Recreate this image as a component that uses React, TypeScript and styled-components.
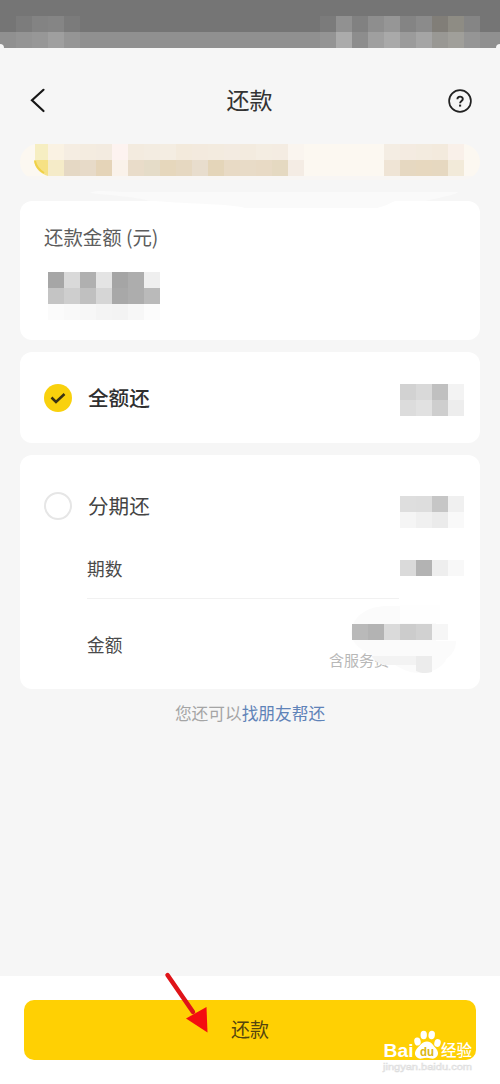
import React from 'react';
import styled, { createGlobalStyle } from 'styled-components';

const GlobalStyle = createGlobalStyle`
  * { box-sizing: border-box; }
  body { margin: 0; background: #f6f6f6; }
`;

const Screen = styled.div`
  display: flex;
  flex-direction: column;
  width: 500px;
  height: 1084px;
  overflow: hidden;
  background: #f6f6f6;
  color: #333;
  font-family: 'Noto Sans CJK SC', sans-serif;
`;

const StatusBar = styled.div`
  position: relative;
  height: 48px;
  flex: none;
  background: linear-gradient(#757575 0 32px, #909090 32px);
  padding: 16px 20px 0 16px;
  display: flex;
  justify-content: space-between;
`;

const Corner = styled.i<{ $side: 'left' | 'right' }>`
  position: absolute;
  bottom: 0;
  ${(p) => p.$side}: 0;
  width: 4px;
  height: 4px;
  background: #f6f6f6;
  border-radius: ${(p) => (p.$side === 'left' ? '0 4px 0 0' : '4px 0 0 0')};
`;

const MosaicGrid = styled.div<{ $cols: number }>`
  display: grid;
  flex: none;
  grid-template-columns: repeat(${(p) => p.$cols}, 16px);
  grid-auto-rows: 16px;
`;

const Cell = styled.i<{ $tone: string }>`
  background: ${(p) => p.$tone};
`;

function Mosaic({ rows }: { rows: string[] }) {
  const grid = rows.map((r) => r.split(' '));
  return (
    <MosaicGrid $cols={grid[0].length}>
      {grid.flat().map((c, i) => (
        <Cell key={i} $tone={c === '-' ? 'transparent' : `#${c}`} />
      ))}
    </MosaicGrid>
  );
}

const Header = styled.header`
  height: 96px;
  flex: none;
  display: flex;
  align-items: center;
  justify-content: space-between;
  padding: 9px 28px 0 29px;
`;

const Title = styled.h1`
  margin: 0;
  padding: 0 0 4px 4px;
  font-size: 23px;
  font-weight: 400;
  line-height: 32px;
`;

const HeaderIcon = styled.svg`
  display: block;
  flex: none;
`;

const Banner = styled.div`
  position: relative;
  height: 36px;
  flex: none;
  margin: 0 20px;
  padding: 0 16px 0 12px;
  border-radius: 18px;
  background: linear-gradient(#fcf8f1 0 32px, #f8f6f4 32px);
  display: flex;
  justify-content: space-between;
`;

const Coin = styled.svg`
  position: absolute;
  left: 14px;
  top: 0;
`;

const Smudge = styled.svg`
  display: block;
  flex: none;
  margin: 5px 0 0 90px;
`;

const Card = styled.section<{ $height: number }>`
  height: ${(p) => p.$height}px;
  margin: 0 20px 12px;
  flex: none;
  background: #fff;
  border-radius: 12px;
`;

const AmountCard = styled(Card)`
  position: relative;
  padding: 22px 24px 0;
`;

const CardSmear = styled.svg`
  position: absolute;
  left: 135px;
  top: 0;
`;

const AmountLabel = styled.div`
  font-size: 19.4px;
  line-height: 28px;
  color: #5c5c5c;
`;

const AmountValue = styled.div`
  padding: 21px 0 0 4px;
`;

const OptionCard = styled(Card)`
  display: flex;
  flex-direction: column;
`;

const OptionRow = styled.div<{ $height: number; $top?: number }>`
  height: ${(p) => p.$height}px;
  padding: ${(p) => p.$top ?? 0}px 16px 0 24px;
  display: flex;
  align-items: center;
`;

const Radio = styled.span<{ $checked?: boolean }>`
  width: 28px;
  height: 28px;
  flex: none;
  border-radius: 50%;
  border: ${(p) => (p.$checked ? 'none' : '2px solid #e6e6e6')};
  background: ${(p) => (p.$checked ? '#f9d10d' : '#fff')};
  display: flex;
  align-items: center;
  justify-content: center;
`;

const OptionName = styled.span<{ $strong?: boolean }>`
  flex: 1;
  margin-left: 16px;
  padding-bottom: 2px;
  font-size: 20.6px;
  line-height: 30px;
  font-weight: ${(p) => (p.$strong ? 500 : 400)};
  color: ${(p) => (p.$strong ? '#303030' : '#444')};
`;

const OptionValue = styled.div<{ $drop: number }>`
  padding-top: ${(p) => p.$drop}px;
`;

const DetailRow = styled.div<{ $height: number }>`
  height: ${(p) => p.$height}px;
  padding: 0 16px 0 67px;
  display: flex;
  align-items: center;
  justify-content: space-between;
`;

const DetailName = styled.span`
  font-size: 17.7px;
  line-height: 26px;
  color: #4a4a4a;
`;

const Divider = styled.hr`
  margin: 0 81px 0 67px;
  border: 0;
  height: 1px;
  flex: none;
  background: #f1f1f1;
`;

const SumColumn = styled.div`
  position: relative;
  width: 135px;
  height: 90px;
  padding-top: 49px;
`;

const Fee = styled.span`
  display: block;
  font-size: 15px;
  line-height: 24px;
  color: #b8b8b8;
`;

const Veil = styled.svg`
  position: absolute;
  left: 0;
  top: 0;
`;

const SumMask = styled.div`
  position: absolute;
  right: 16px;
  top: 25px;
`;

const Hint = styled.p`
  margin: 0;
  text-align: center;
  font-size: 16.7px;
  line-height: 25px;
  color: #a5a5a5;
`;

const FriendLink = styled.a`
  color: #5f83b8;
`;

const Footer = styled.footer`
  position: relative;
  margin-top: auto;
  height: 108px;
  flex: none;
  background: #fff;
  padding: 24px;
`;

const PayButton = styled.button`
  display: block;
  width: 452px;
  height: 60px;
  border: 0;
  border-radius: 10px;
  padding: 0 0 2px;
  background: #ffd003;
  color: #54450f;
  font: 400 19px/58px 'Noto Sans CJK SC', sans-serif;
`;

const Pointer = styled.svg`
  position: absolute;
  left: 160px;
  top: -8px;
`;

const Watermark = styled.svg`
  position: absolute;
  left: 376px;
  top: 50px;
`;

export default function App() {
  return (
    <Screen>
      <GlobalStyle />
      <StatusBar>
        <Mosaic rows={['7c7c7c 838383 858585 7b7b7b', '949494 979797 9f9f9f 959595']} />
        <Mosaic
          rows={[
            '7b7b7b 919191 818181 8e8e8e 969696 848484 8b8b8b 817e78 8e8c84 858585',
            '949494 ababab 8d8d8d 9f9f9f a9a9a9 9b9b9b a5a5a5 999894 a09f9a 959595',
          ]}
        />
        <Corner $side="left" />
        <Corner $side="right" />
      </StatusBar>

      <Header>
        <HeaderIcon width="18" height="26" viewBox="0 0 18 26" fill="none" stroke="#171717" strokeWidth="2.2">
          <path d="M14.500 1.800 3 12.300l11.500 10.700" strokeLinecap="round" />
        </HeaderIcon>
        <Title>还款</Title>
        <HeaderIcon width="24" height="24" viewBox="0 0 24 24" fill="none" stroke="#222" strokeWidth="1.7">
          <circle cx="12" cy="12" r="10.9" />
          <path d="M9.400 10.200C9.400 6.800 14.800 6.800 14.800 9.900c0 2-2.700 2.100-2.700 4.300" strokeWidth="1.9" />
          <path d="M12.100 15.600v2" strokeWidth="2.100" />
        </HeaderIcon>
      </Header>

      <Banner>
        <Mosaic
          rows={[
            '- faf2e3 f5ede2 f4ece0 f3ebe0 fdf3f0 f3ebdf f3ece1 f4ede2 f3eadc f3eade f3ebdf f3ebe1 f3ebdf f4ede2 f4ece2 faf5ef',
            '- f5ebc8 e5d8c4 e7dac8 e5d4b8 faf2ea e9dcc9 e5dcc8 e6d7bc e6d8c1 e8ddcd e4d5b9 e8dac5 e8dbc7 e8dac5 e5d9c1 f4ece4',
          ]}
        />
        <Mosaic rows={['f4ede3 f4ebe1 f3ebdf f3eadd f9f0e9', 'efe4d5 e6d8c1 e7d8bf e6d8c0 f2ead9']} />
        <Coin width="14" height="32" viewBox="0 0 14 32">
          <path d="M1 0h13v16H1z" fill="#f6eec2" />
          <path d="M0 16h14v16C8 30 1 26 0 16z" fill="#f6e184" />
          <path d="M1 17c1 6 4 9 9 12" fill="none" stroke="#f0d147" strokeWidth="2" />
        </Coin>
      </Banner>
      <Smudge width="390" height="16" viewBox="0 0 390 16">
        <path d="M0 8C5 4 20 7 42 7h326c-2 3-22 6-32 9H60C40 11 25 11 0 8z" fill="#fafafa" />
      </Smudge>

      <AmountCard $height={139}>
        <CardSmear width="240" height="7" viewBox="0 0 240 7">
          <path d="M0 0h240c-6 3-10 5-18 7H90C80 3 35 3 0 0z" fill="#fafafa" />
        </CardSmear>
        <AmountLabel>还款金额 (元)</AmountLabel>
        <AmountValue>
          <Mosaic
            rows={[
              'a6a6a6 d9d9d9 b0b0b0 e4e4e4 a5a5a5 adadad efefef',
              'c4c4c4 cecece c0c0c0 d6d6d6 a8a8a8 adadad bababa',
              'fbfbfb f9f9f9 f7f7f7 f4f4f4 f3f3f3 f7f7f7 fcfcfc',
            ]}
          />
        </AmountValue>
      </AmountCard>

      <OptionCard $height={91}>
        <OptionRow $height={91} $top={1}>
          <Radio $checked>
            <svg width="16" height="14" viewBox="0 0 16 14" fill="none" stroke="#3a3213" strokeWidth="2.5">
              <path d="M1.500 6.500 6 11l8.500-8" />
            </svg>
          </Radio>
          <OptionName $strong>全额还</OptionName>
          <OptionValue $drop={4}>
            <Mosaic rows={['d2d2d2 d9d9d9 c0c0c0 f3f3f3', 'dcdcdc e1e1e1 cecece ededed']} />
          </OptionValue>
        </OptionRow>
      </OptionCard>

      <OptionCard $height={234}>
        <OptionRow $height={82} $top={20}>
          <Radio />
          <OptionName>分期还</OptionName>
          <OptionValue $drop={12}>
            <Mosaic rows={['dedede dddddd c6c6c6 f0f0f0', 'f5f5f5 f0f0f0 ebebeb f9f9f9']} />
          </OptionValue>
        </OptionRow>
        <DetailRow $height={61}>
          <DetailName>期数</DetailName>
          <Mosaic rows={['dadada b3b3b3 eeeeee f8f8f8']} />
        </DetailRow>
        <Divider />
        <DetailRow $height={90}>
          <DetailName>金额</DetailName>
          <SumColumn>
            <Fee>含服务费</Fee>
            <Veil width="135" height="90" viewBox="0 0 135 90">
              <path d="M22 34C24 14 42 6 62 7h45v35h20c0 8-4 14-10 18-2 8-15 14-26 14-12 0-20-5-25-8-10 0-17-1-21-9-12-5-22-12-23-23z" fill="#fbfbfb" />
              <path d="M71 6h40v18H71z" fill="#fefefe" />
              <path d="M42 57h49v9H58c-7 0-11-3-16-9z" fill="#f3f3f3" />
              <path d="M87 57h16v16c-6 2-12 1-16-1z" fill="#ececec" />
            </Veil>
            <SumMask>
              <Mosaic rows={['b9b9b9 b3b3b3 dadada cccccc d1d1d1 f6f6f6']} />
            </SumMask>
          </SumColumn>
        </DetailRow>
      </OptionCard>

      <Hint>
        您还可以<FriendLink>找朋友帮还</FriendLink>
      </Hint>

      <Footer>
        <PayButton>还款</PayButton>
        <Pointer width="54" height="70" viewBox="0 0 54 70">
          <path d="M7.500 7 33 44" stroke="#df1419" strokeWidth="4.5" strokeLinecap="round" />
          <path d="M47.500 64.500 46.500 39 26 50.500z" fill="#f40d10" />
        </Pointer>
        <Watermark width="110" height="54" viewBox="0 0 110 54" fill="#fff">
          <text x="7.500" y="31" fontFamily="'Liberation Sans'" fontWeight="700" fontSize="18.500" textLength="30" lengthAdjust="spacingAndGlyphs">Bai</text>
          <ellipse cx="41.500" cy="15.500" rx="3.200" ry="4" transform="rotate(-12 41.500 15.500)" />
          <ellipse cx="47.700" cy="9" rx="3.200" ry="4.200" />
          <ellipse cx="55.700" cy="9" rx="3.200" ry="4.200" transform="rotate(8 55.700 9)" />
          <ellipse cx="61.500" cy="17" rx="3.200" ry="4" transform="rotate(15 61.500 17)" />
          <path d="M51 15.500c5 0 6 4 9 7 5 6 0 11-5 10-3-1-6-1-9 0-5 1-10-4-5-10 3-3 5-7 10-7z" />
          <text x="44" y="30" fill="#dab510" fontFamily="'Liberation Sans'" fontWeight="700" fontSize="12" textLength="14" lengthAdjust="spacingAndGlyphs">du</text>
          <text x="65" y="30" fontFamily="'Noto Sans CJK SC'" fontWeight="500" fontSize="15.500" textLength="31">经验</text>
          <text x="7" y="44" fill="#fff" stroke="#dedede" strokeWidth=".6" fontFamily="'Liberation Sans'" fontSize="9.500" textLength="89" lengthAdjust="spacingAndGlyphs">jingyan.baidu.com</text>
        </Watermark>
      </Footer>
    </Screen>
  );
}
